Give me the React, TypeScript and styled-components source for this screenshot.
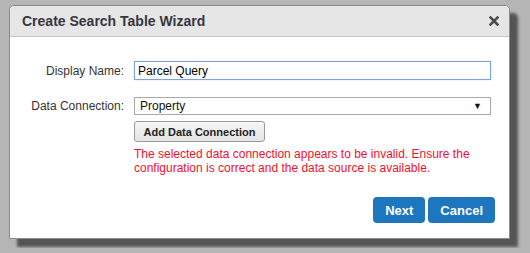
import React from "react";
import styled, { createGlobalStyle } from "styled-components";

const Global = createGlobalStyle`
  html, body { margin: 0; padding: 0; background: #b5b5b5; }
  body { font-family: "Liberation Sans", Arial, sans-serif; }
`;

const Page = styled.div`
  padding: 5px 0 0 9px;
  height: 248px;
  box-sizing: border-box;
`;

const Dialog = styled.div`
  width: 501px;
  height: 234px;
  box-sizing: border-box;
  background: #fff;
  border: 1px solid #8a8a8a;
  border-radius: 5px 5px 0 0;
  box-shadow: 8px 8px 3px #555;
  display: flex;
  flex-direction: column;
`;

const Header = styled.div`
  height: 31px;
  box-sizing: border-box;
  background: #e6e6e6;
  border-bottom: 1px solid #c4c4c4;
  border-radius: 5px 5px 0 0;
  display: flex;
  align-items: center;
  justify-content: space-between;
  padding: 0 10px 0 12px;
`;

const Title = styled.h1`
  margin: 0;
  font-size: 14px;
  font-weight: bold;
  color: #363643;
`;

const Close = styled.button`
  border: 0;
  background: none;
  padding: 0;
  width: 10px;
  height: 10px;
  display: flex;
  cursor: pointer;
`;

const Body = styled.div`
  flex: 1;
  display: flex;
  flex-direction: column;
  padding: 24px 14px 15px 0;
`;

const Row = styled.div<{ $gap?: number }>`
  display: grid;
  grid-template-columns: 114px 357px;
  column-gap: 10px;
  align-items: start;
  margin-bottom: ${(p) => p.$gap ?? 0}px;
`;

const Label = styled.label<{ $top: number }>`
  text-align: right;
  font-size: 12px;
  color: #333;
  padding-top: ${(p) => p.$top}px;
`;

const Field = styled.div`
  display: flex;
  flex-direction: column;
  align-items: flex-start;
`;

const TextInput = styled.input`
  width: 357px;
  height: 19px;
  box-sizing: border-box;
  border: 1px solid #7aa3e4;
  box-shadow: 0 0 1px #9fc0ef;
  padding: 0 3px;
  font-family: "Liberation Sans", Arial, sans-serif;
  font-size: 12px;
  color: #000;
  outline: none;
`;

const Select = styled.div`
  width: 357px;
  height: 18px;
  box-sizing: border-box;
  border: 1px solid #a9a9a9;
  padding: 0 8px 0 5px;
  display: flex;
  align-items: center;
  justify-content: space-between;
  font-size: 12px;
  color: #111;
`;

const Arrow = styled.span`
  font-size: 9px;
  color: #111;
`;

const SmallButton = styled.button`
  margin-top: 6px;
  height: 21px;
  width: 131px;
  padding: 0;
  border: 1px solid #9a9a9a;
  border-radius: 3px;
  background: linear-gradient(#f6f6f6, #e4e4e4);
  font-family: "Liberation Sans", Arial, sans-serif;
  font-size: 11px;
  font-weight: bold;
  color: #222;
`;

const Error = styled.div`
  margin-top: 5px;
  font-size: 12px;
  line-height: 14px;
  color: #f0102e;
  width: 357px;
`;

const Footer = styled.div`
  margin-top: auto;
  display: flex;
  justify-content: flex-end;
  gap: 3px;
`;

const Primary = styled.button`
  height: 26px;
  padding: 0 12px;
  border: 0;
  border-radius: 4px;
  background: #1d76be;
  color: #fff;
  font-family: "Liberation Sans", Arial, sans-serif;
  font-size: 13px;
  font-weight: bold;
`;

export default function App() {
  return (
    <>
      <Global />
      <Page>
        <Dialog>
          <Header>
            <Title>Create Search Table Wizard</Title>
            <Close aria-label="Close">
              <svg width="10" height="10" viewBox="0 0 10 10">
                <path d="M1.5 1.5 L8.5 8.5 M8.5 1.5 L1.5 8.5" stroke="#4d4d4d" strokeWidth="2.6" strokeLinecap="square" />
              </svg>
            </Close>
          </Header>
          <Body>
            <Row $gap={17}>
              <Label $top={3}>Display Name:</Label>
              <Field>
                <TextInput defaultValue="Parcel Query" />
              </Field>
            </Row>
            <Row>
              <Label $top={2}>Data Connection:</Label>
              <Field>
                <Select>
                  <span>Property</span>
                  <Arrow>▼</Arrow>
                </Select>
                <SmallButton>Add Data Connection</SmallButton>
                <Error>
                  The selected data connection appears to be invalid. Ensure the configuration is correct and the data source is available.
                </Error>
              </Field>
            </Row>
            <Footer>
              <Primary>Next</Primary>
              <Primary>Cancel</Primary>
            </Footer>
          </Body>
        </Dialog>
      </Page>
    </>
  );
}
